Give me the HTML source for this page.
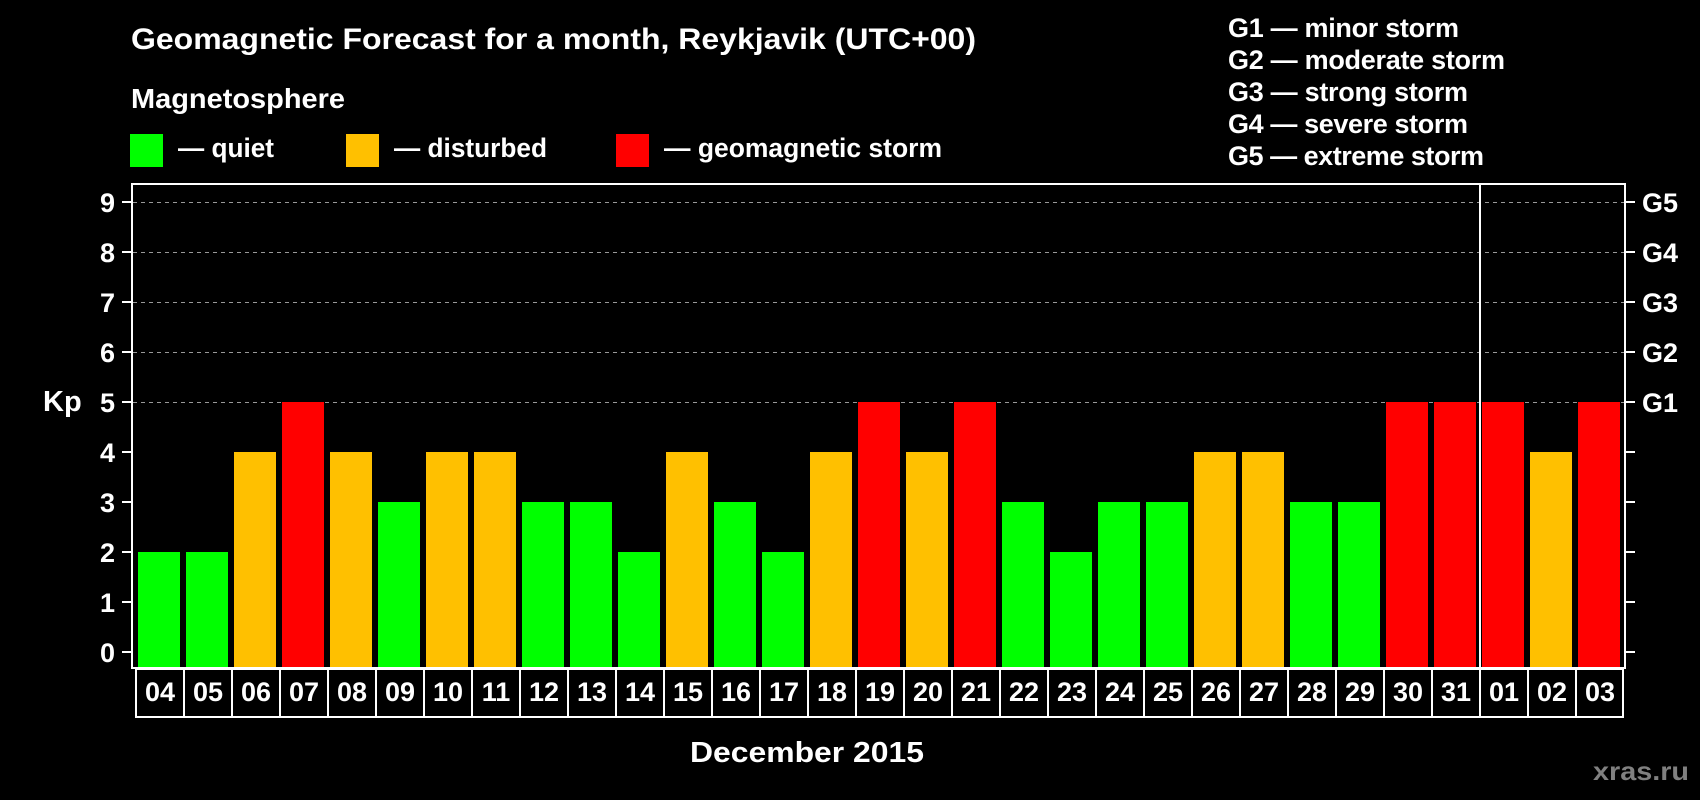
<!DOCTYPE html>
<html><head><meta charset="utf-8"><style>html,body{margin:0;padding:0;background:#000;}svg{display:block}</style></head><body>
<svg width="1700" height="800" viewBox="0 0 1700 800" xmlns="http://www.w3.org/2000/svg" font-family="Liberation Sans, Arial, sans-serif" font-weight="bold" fill="#fff">
<rect width="1700" height="800" fill="#000"/>
<text x="131" y="49" font-size="30" textLength="845" lengthAdjust="spacingAndGlyphs">Geomagnetic Forecast for a month, Reykjavik (UTC+00)</text>
<text x="131" y="108" font-size="28" textLength="214" lengthAdjust="spacingAndGlyphs">Magnetosphere</text>
<rect x="130" y="134" width="33" height="33" fill="#00ff00"/>
<rect x="346" y="134" width="33" height="33" fill="#ffc000"/>
<rect x="616" y="134" width="33" height="33" fill="#ff0000"/>
<text x="178" y="157" font-size="27" textLength="96" lengthAdjust="spacingAndGlyphs">— quiet</text>
<text x="394" y="157" font-size="27" textLength="153" lengthAdjust="spacingAndGlyphs">— disturbed</text>
<text x="664" y="157" font-size="27" textLength="278" lengthAdjust="spacingAndGlyphs">— geomagnetic storm</text>
<g font-size="27" lengthAdjust="spacingAndGlyphs">
<text x="1228" y="37" textLength="231">G1 — minor storm</text>
<text x="1228" y="69" textLength="277">G2 — moderate storm</text>
<text x="1228" y="101" textLength="240">G3 — strong storm</text>
<text x="1228" y="133" textLength="240">G4 — severe storm</text>
<text x="1228" y="165" textLength="256">G5 — extreme storm</text>
</g>
<g stroke="#999" stroke-width="1" stroke-dasharray="4,4">
<line x1="133" y1="202.5" x2="1624" y2="202.5"/>
<line x1="133" y1="252.5" x2="1624" y2="252.5"/>
<line x1="133" y1="302.5" x2="1624" y2="302.5"/>
<line x1="133" y1="352.5" x2="1624" y2="352.5"/>
<line x1="133" y1="402.5" x2="1624" y2="402.5"/>
</g>
<g>
<rect x="138" y="552" width="42" height="116" fill="#00ff00"/>
<rect x="186" y="552" width="42" height="116" fill="#00ff00"/>
<rect x="234" y="452" width="42" height="216" fill="#ffc000"/>
<rect x="282" y="402" width="42" height="266" fill="#ff0000"/>
<rect x="330" y="452" width="42" height="216" fill="#ffc000"/>
<rect x="378" y="502" width="42" height="166" fill="#00ff00"/>
<rect x="426" y="452" width="42" height="216" fill="#ffc000"/>
<rect x="474" y="452" width="42" height="216" fill="#ffc000"/>
<rect x="522" y="502" width="42" height="166" fill="#00ff00"/>
<rect x="570" y="502" width="42" height="166" fill="#00ff00"/>
<rect x="618" y="552" width="42" height="116" fill="#00ff00"/>
<rect x="666" y="452" width="42" height="216" fill="#ffc000"/>
<rect x="714" y="502" width="42" height="166" fill="#00ff00"/>
<rect x="762" y="552" width="42" height="116" fill="#00ff00"/>
<rect x="810" y="452" width="42" height="216" fill="#ffc000"/>
<rect x="858" y="402" width="42" height="266" fill="#ff0000"/>
<rect x="906" y="452" width="42" height="216" fill="#ffc000"/>
<rect x="954" y="402" width="42" height="266" fill="#ff0000"/>
<rect x="1002" y="502" width="42" height="166" fill="#00ff00"/>
<rect x="1050" y="552" width="42" height="116" fill="#00ff00"/>
<rect x="1098" y="502" width="42" height="166" fill="#00ff00"/>
<rect x="1146" y="502" width="42" height="166" fill="#00ff00"/>
<rect x="1194" y="452" width="42" height="216" fill="#ffc000"/>
<rect x="1242" y="452" width="42" height="216" fill="#ffc000"/>
<rect x="1290" y="502" width="42" height="166" fill="#00ff00"/>
<rect x="1338" y="502" width="42" height="166" fill="#00ff00"/>
<rect x="1386" y="402" width="42" height="266" fill="#ff0000"/>
<rect x="1434" y="402" width="42" height="266" fill="#ff0000"/>
<rect x="1482" y="402" width="42" height="266" fill="#ff0000"/>
<rect x="1530" y="452" width="42" height="216" fill="#ffc000"/>
<rect x="1578" y="402" width="42" height="266" fill="#ff0000"/>
</g>
<g stroke="#fff" stroke-width="2" fill="none">
<rect x="132" y="184" width="1493" height="484"/>
<line x1="1480" y1="184" x2="1480" y2="668"/>
<rect x="136" y="669" width="1487" height="48"/>
<path d="M184 669V717M232 669V717M280 669V717M328 669V717M376 669V717M424 669V717M472 669V717M520 669V717M568 669V717M616 669V717M664 669V717M712 669V717M760 669V717M808 669V717M856 669V717M904 669V717M952 669V717M1000 669V717M1048 669V717M1096 669V717M1144 669V717M1192 669V717M1240 669V717M1288 669V717M1336 669V717M1384 669V717M1432 669V717M1480 669V717M1528 669V717M1576 669V717"/>
<path d="M122 202H132M122 252H132M122 302H132M122 352H132M122 402H132M122 452H132M122 502H132M122 552H132M122 602H132M122 652H132"/>
<path d="M1625 202H1635M1625 252H1635M1625 302H1635M1625 352H1635M1625 402H1635M1625 452H1635M1625 502H1635M1625 552H1635M1625 602H1635M1625 652H1635"/>
</g>
<g font-size="27" text-anchor="end">
<text x="115" y="212">9</text><text x="115" y="262">8</text><text x="115" y="312">7</text><text x="115" y="362">6</text><text x="115" y="412">5</text><text x="115" y="462">4</text><text x="115" y="512">3</text><text x="115" y="562">2</text><text x="115" y="612">1</text><text x="115" y="662">0</text>
</g>
<g font-size="27">
<text x="1642" y="212">G5</text><text x="1642" y="262">G4</text><text x="1642" y="312">G3</text><text x="1642" y="362">G2</text><text x="1642" y="412">G1</text>
</g>
<text x="43" y="411" font-size="29">Kp</text>
<g font-size="27" text-anchor="middle">
<text x="160" y="701">04</text><text x="208" y="701">05</text><text x="256" y="701">06</text><text x="304" y="701">07</text><text x="352" y="701">08</text><text x="400" y="701">09</text><text x="448" y="701">10</text><text x="496" y="701">11</text><text x="544" y="701">12</text><text x="592" y="701">13</text><text x="640" y="701">14</text><text x="688" y="701">15</text><text x="736" y="701">16</text><text x="784" y="701">17</text><text x="832" y="701">18</text><text x="880" y="701">19</text><text x="928" y="701">20</text><text x="976" y="701">21</text><text x="1024" y="701">22</text><text x="1072" y="701">23</text><text x="1120" y="701">24</text><text x="1168" y="701">25</text><text x="1216" y="701">26</text><text x="1264" y="701">27</text><text x="1312" y="701">28</text><text x="1360" y="701">29</text><text x="1408" y="701">30</text><text x="1456" y="701">31</text><text x="1504" y="701">01</text><text x="1552" y="701">02</text><text x="1600" y="701">03</text>
</g>
<text x="690" y="762" font-size="29" textLength="234" lengthAdjust="spacingAndGlyphs">December 2015</text>
<text x="1593" y="780" font-size="26" fill="#808080" textLength="96" lengthAdjust="spacingAndGlyphs">xras.ru</text>
</svg>
</body></html>
